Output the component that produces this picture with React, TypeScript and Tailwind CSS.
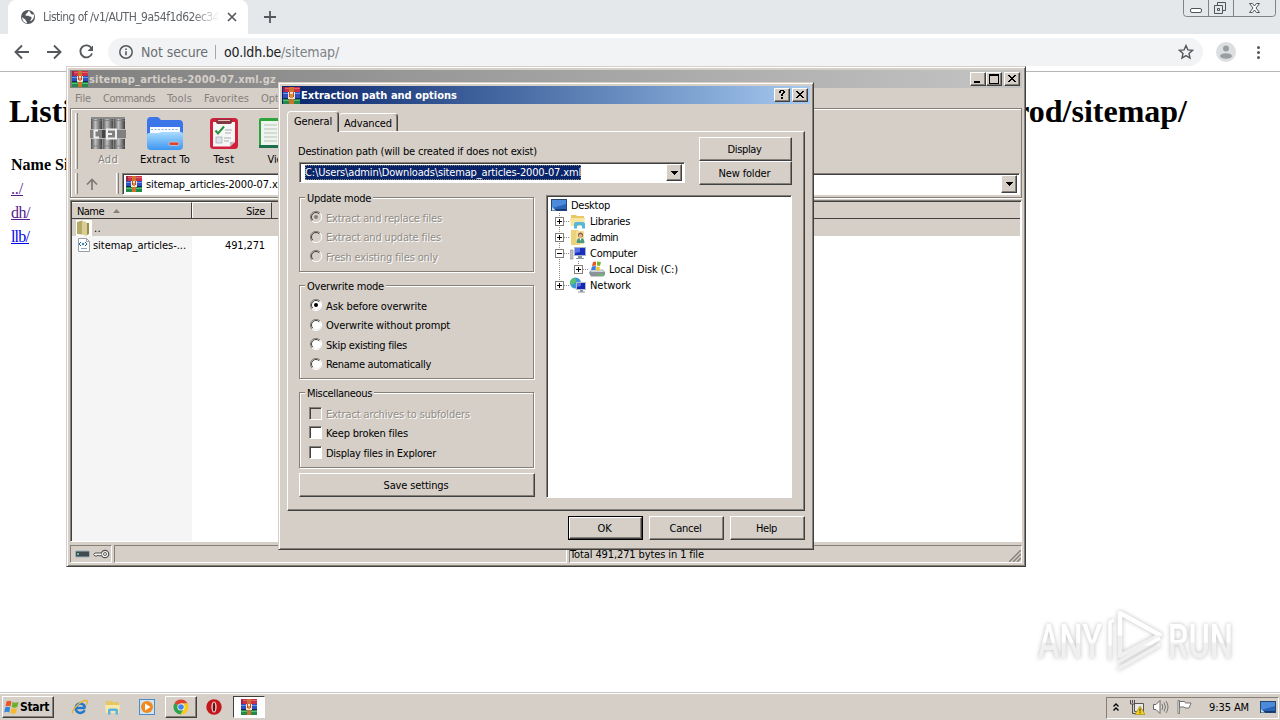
import React, { useLayoutEffect, useRef } from "react";

type Kids = { children?: React.ReactNode };

const UI = "font-['DejaVu_Sans_Condensed','DejaVu_Sans',sans-serif] [font-stretch:condensed]";
const RAISED =
  "border border-t-white border-l-white border-r-[#404040] border-b-[#404040] shadow-[inset_-1px_-1px_0_#858078] bg-[#d5cfc8]";
const SUNKEN =
  "border border-t-[#858078] border-l-[#858078] border-r-white border-b-white shadow-[inset_1px_1px_0_#404040]";
const FRAME =
  "border border-t-[#d5cfc8] border-l-[#d5cfc8] border-r-[#404040] border-b-[#404040] shadow-[inset_1px_1px_0_#fff,inset_-1px_-1px_0_#858078] bg-[#d5cfc8]";

/* A single line of text whose tracking is adjusted so that it spans w pixels.
   Unless flat, its baseline sits one pixel lower than the line box centre. */
function T({ w, flat, className = "", children }: { w: number; flat?: boolean; className?: string; children: string }) {
  const ref = useRef<HTMLSpanElement>(null);
  useLayoutEffect(() => {
    const el = ref.current;
    if (!el) return;
    el.style.letterSpacing = "0px";
    const natural = el.getBoundingClientRect().width;
    el.style.letterSpacing = `${(w - natural) / children.length}px`;
  }, [w, children]);
  return (
    <span ref={ref} className={`inline-block shrink-0 whitespace-pre ${flat ? "" : "mt-px -mb-px"} ${className}`}>
      {children}
    </span>
  );
}

function RarIcon({ className = "h-4 w-4" }: { className?: string }) {
  return (
    <svg viewBox="0 0 16 16" className={`shrink-0 ${className}`} shapeRendering="crispEdges">
      <rect width="16" height="16" fill="#2a2040" />
      <rect x="0" y="0" width="16" height="5" fill="#c9304a" />
      <rect x="0" y="0" width="2" height="5" fill="#96264c" />
      <rect x="2" y="1" width="14" height="1" fill="#e4606c" />
      <rect x="0" y="5" width="16" height="5" fill="#2c50c0" />
      <rect x="0" y="6" width="16" height="1" fill="#7096ec" />
      <rect x="0" y="10" width="16" height="1" fill="#1c2450" />
      <rect x="0" y="11" width="16" height="5" fill="#238a4a" />
      <rect x="0" y="12" width="16" height="1" fill="#50c47a" />
      <rect x="6" y="0" width="4" height="16" fill="#cc742e" />
      <rect x="5" y="5" width="6" height="6" fill="#efe3cc" />
      <rect x="6" y="5" width="1" height="4" fill="#c04e2c" />
      <rect x="9" y="5" width="1" height="4" fill="#c04e2c" />
      <rect x="7" y="7" width="2" height="3" fill="#dc903c" />
    </svg>
  );
}

function MonitorIcon({ className = "h-4 w-4" }: { className?: string }) {
  return (
    <svg viewBox="0 0 16 16" className={`shrink-0 ${className}`}>
      <rect x="0.5" y="2.5" width="15" height="11" fill="#2865b8" stroke="#26466e" />
      <path d="M1 3h14v4L1 11z" fill="#4c8bdc" />
      <path d="M1 12h14v1.5H1z" fill="#163a70" />
      <path d="M1 10l4 3.5H1z" fill="#b9dcf0" />
    </svg>
  );
}

function CapButton({ children, className = "" }: Kids & { className?: string }) {
  return (
    <div className={`flex h-[14px] w-4 items-center justify-center ${RAISED} ${className}`}>
      <svg viewBox="0 0 12 10" className="h-[10px] w-3 shrink-0" shapeRendering="crispEdges">
        {children}
      </svg>
    </div>
  );
}

const CloseGlyph = () => (
  <path
    d="M2 1h2v1H2zM8 1h2v1H8zM3 2h2v1H3zM7 2h2v1H7zM4 3h4v1H4zM5 4h2v1H5zM4 5h4v1H4zM3 6h2v1H3zM7 6h2v1H7zM2 7h2v1H2zM8 7h2v1H8z"
    fill="#000"
  />
);

function DropArrow({ className = "" }: { className?: string }) {
  return (
    <div className={`flex w-4 shrink-0 items-center justify-center ${RAISED} ${className}`}>
      <svg viewBox="0 0 7 4" className="h-1 w-[7px]" shapeRendering="crispEdges">
        <path d="M0 0h7v1H0zM1 1h5v1H1zM2 2h3v1H2zM3 3h1v1H3z" fill="#000" />
      </svg>
    </div>
  );
}

/* ---------- Browser ---------- */

function Browser() {
  return (
    <div className="flex h-[692px] flex-col bg-white">
      <div className="flex h-[34px] justify-between bg-[#e4e8eb]">
        <div className="flex">
          <div className="ml-2 flex h-[34px] w-[240px] items-center rounded-t-lg bg-white pl-3">
            <svg viewBox="0 0 16 16" className="h-4 w-4 shrink-0">
              <circle cx="8" cy="8" r="7" fill="#54585c" />
              <path d="M2.2 8.2l3 2.4c1 .6.3 1.6 1.6 2.2l.3 1.4C4 13.800 1.800 11 2.200 8.200z" fill="#fff" />
              <path d="M9 1.800c-1.600.500-.400 1.800-2 2.300-1 .400-.600 1.700-1.700 1.800 1 1.600 2.800.200 4 1.400.900 1 2.300 0 2.300 1.600 0 1.400-1.400 1.600-1.300 3.400 3-1.200 4.400-4.300 3.300-7.300-.8.700-2 .7-2.600-.2-.6-1-1-1.900-2-3z" fill="#fff" />
            </svg>
            <div className="ml-[7px] flex w-[176px] overflow-hidden pb-px [mask-image:linear-gradient(to_right,#000_85%,transparent)]">
              <T w={176} flat className="font-['DejaVu_Sans_Condensed','DejaVu_Sans'] text-[12px] leading-[18px] text-[#5f6368]">
                Listing of /v1/AUTH_9a54f1d62ec34
              </T>
            </div>
            <svg viewBox="0 0 10 10" className="ml-2 h-[10px] w-[10px] shrink-0">
              <path d="M1 1l8 8M9 1l-8 8" stroke="#54585c" strokeWidth="1.700" />
            </svg>
          </div>
          <svg viewBox="0 0 14 14" className="mt-[10px] ml-[15px] h-[14px] w-[14px]">
            <path d="M7 1v12M1 7h12" stroke="#54585c" strokeWidth="1.800" />
          </svg>
        </div>
        <svg viewBox="0 0 94 18" className="mr-[3px] h-[18px] w-[94px]" fill="none">
          <path d="M.5 0v13.500q0 3 3 3h86q3 0 3-3V0M25.500 0v16M50.500 0v16" stroke="#7f8489" />
          <rect x="7.500" y="8.500" width="11" height="4" rx="1.500" stroke="#4f5459" fill="#fff" />
          <path d="M34.500 5.500v-3h8v8h-3M31.500 5.500h8v8h-8zM34.500 8.500h2v2h-2z" stroke="#4f5459" />
          <path d="M66.500 3.500h3l2 2.500 2-2.500h3l-3.500 4.500 3.500 4.500h-3l-2-2.500-2 2.500h-3l3.500-4.500z" stroke="#4f5459" fill="#fff" />
        </svg>
      </div>
      <div className="flex h-[38px] shrink-0 items-center border-b border-[#b4b6b8] bg-white pb-px">
        <svg viewBox="0 0 88 20" className="ml-[12px] h-5 w-[88px] shrink-0" fill="none" stroke="#54585c" strokeWidth="1.900">
          <path d="M17 10H4M10 3.500L3.500 10l6.500 6.500M35 10h13M42 3.500l6.500 6.500-6.500 6.500" />
          <path d="M79.500 6.200A6 6 0 1 0 80 11.500" />
          <path d="M81 3.500v5.500h-5.500z" fill="#54585c" stroke="none" />
        </svg>
        <div className="ml-[8px] flex h-7 w-[1095px] items-center rounded-full bg-[#f1f3f4] pl-[10px]">
          <svg viewBox="0 0 16 16" className="h-4 w-4 shrink-0">
            <circle cx="8" cy="8" r="6.200" fill="none" stroke="#54585c" strokeWidth="1.500" />
            <path d="M7.200 7.200h1.600v4H7.200zM7.200 4.500h1.600v1.600H7.200z" fill="#54585c" />
          </svg>
          <T w={67} flat className="ml-[7px] font-['DejaVu_Sans_Condensed','DejaVu_Sans'] text-[14px] leading-5 text-[#6b6f74]">Not secure</T>
          <div className="ml-[7px] h-[14px] w-px bg-[#a3a7ab]" />
          <T w={57} flat className="ml-[8px] font-['DejaVu_Sans_Condensed','DejaVu_Sans'] text-[14px] leading-5 text-[#202124]">o0.ldh.be</T>
          <T w={58} flat className="font-['DejaVu_Sans_Condensed','DejaVu_Sans'] text-[14px] leading-5 text-[#7d8186]">/sitemap/</T>
          <svg viewBox="0 0 16 16" className="mr-[9px] ml-auto h-4 w-4" fill="none">
            <path d="M8 1.600l1.900 4.300 4.600.4-3.500 3.100 1 4.600-4-2.400-4 2.400 1-4.600L1.500 6.300l4.600-.4z" stroke="#54585c" strokeWidth="1.400" />
          </svg>
        </div>
        <svg viewBox="0 0 20 20" className="ml-[13px] h-5 w-5 shrink-0">
          <circle cx="10" cy="10" r="10" fill="#dcdee0" />
          <circle cx="10" cy="6.500" r="3" fill="#9b9ea1" />
          <ellipse cx="10" cy="14" rx="6" ry="2.800" fill="#9b9ea1" />
        </svg>
        <div className="ml-[21px] flex flex-col gap-[2px]">
          <div className="h-[3px] w-[3px] rounded-full bg-[#54585c]" />
          <div className="h-[3px] w-[3px] rounded-full bg-[#54585c]" />
          <div className="h-[3px] w-[3px] rounded-full bg-[#54585c]" />
        </div>
      </div>
      <div className="px-2 pt-[21px] font-['Liberation_Serif',serif] text-base text-black">
        <h1 className="ml-px flex w-[1178px] justify-between text-[32px] leading-[37px] font-bold">
          <span>Listing of /v1/AUTH_9a54f1d62ec34</span>
          <span>prod/sitemap/</span>
        </h1>
        <div className="mt-[23px] flex flex-col items-start pl-[3px]">
          <div className="h-6 leading-6 font-bold">Name Size</div>
          <a className="h-6 leading-6 text-[#551a8b]"><T w={12} flat className="underline">../</T></a>
          <a className="h-6 leading-6 text-[#551a8b]"><T w={19} flat className="underline">dh/</T></a>
          <a className="h-6 leading-6 text-[#0000ee]"><T w={18} flat className="underline">llb/</T></a>
        </div>
      </div>
    </div>
  );
}

/* ---------- Archive window ---------- */

function BooksGrey() {
  return (
    <svg viewBox="0 0 36 34" className="h-[34px] w-9">
      <defs>
        <linearGradient id="spine" x1="0" x2="1">
          <stop offset="0" stopColor="#4e4e4e" />
          <stop offset=".4" stopColor="#c0c0c0" />
          <stop offset="1" stopColor="#3e3e3e" />
        </linearGradient>
      </defs>
      <rect x="1" y="1" width="11" height="32" fill="url(#spine)" />
      <rect x="12.500" y="1" width="11" height="32" fill="url(#spine)" />
      <rect x="24" y="1" width="11" height="32" fill="url(#spine)" />
      <path d="M1 4.500h34M1 30h34" stroke="#777" strokeOpacity=".7" />
      <rect x="0" y="13" width="36" height="10" fill="#808080" />
      <path d="M0 13.500h36M0 22.500h36" stroke="#b9b9b9" />
      <path d="M8 14.500H4.500v7H9M17 13.500h9v9h-9zM22 18h-6" fill="none" stroke="#f0f0f0" strokeWidth="2" />
      <rect x="12" y="14" width="3" height="8" fill="#444" />
      <path d="M1 1h34v2H1z" fill="#8a8a8a" />
    </svg>
  );
}

function FolderBlue() {
  return (
    <svg viewBox="0 0 36 34" className="h-[34px] w-9">
      <defs>
        <linearGradient id="fold" x1="0" x2="0" y1="0" y2="1">
          <stop offset="0" stopColor="#a9dcff" />
          <stop offset="1" stopColor="#3d96f0" />
        </linearGradient>
      </defs>
      <path d="M0 5q0-4 4-4h6q2 0 3 2l1 1h18q4 0 4 4v14H0z" fill="#3a76ea" />
      <path d="M3 11h30v12H3z" fill="#f7fbff" />
      <path d="M4 13.500h28" stroke="#8fb4dc" strokeDasharray="2 1.500" />
      <path d="M0 19q0-2 2-2h10l2-1h20q2 0 2 2v12q0 4-4 4H4q-4 0-4-4z" fill="url(#fold)" />
      <rect x="22" y="26" width="10" height="3.500" rx="1.500" fill="#e2452b" stroke="#b8dcf8" strokeWidth=".7" />
    </svg>
  );
}

function Clipboard() {
  return (
    <svg viewBox="0 0 36 34" className="h-[34px] w-9">
      <rect x="4" y="2" width="28" height="31" rx="3.500" fill="#d2203c" />
      <path d="M7 6h22v20l-5 4.500H7z" fill="#f6f6f6" />
      <path d="M29 26l-5 4.500V26z" fill="#bdbdbd" />
      <rect x="10" y="3" width="16" height="5" rx="2" fill="#83383e" />
      <path d="M12 4.500h12" stroke="#e8c0c0" />
      <path d="M9.500 14.500l2.500 3 6-7" fill="none" stroke="#2b9140" strokeWidth="2" />
      <rect x="10" y="21" width="6" height="6" fill="#dce3ea" stroke="#a2acb6" strokeWidth=".7" />
      <path d="M19 14h7M19 17h6M18 22h7M18 25h5" stroke="#a9adb2" />
    </svg>
  );
}

function BookGreen() {
  return (
    <svg viewBox="0 0 40 34" className="h-[34px] w-[42px] shrink-0">
      <path d="M0 4q0-2 2-2h17l2 2 2-2h16v28H0z" fill="#2fa33c" />
      <path d="M2 5h18v24H2z" fill="#f0f4f0" />
      <path d="M5 9h13M5 13h13M5 17h13M5 21h13M5 25h13" stroke="#b5c4b6" />
      <path d="M0 29h39v3H0z" fill="#1c6f4c" />
    </svg>
  );
}

function Tool({ icon, label, w, className }: { icon: React.ReactNode; label: string; w: number; className: string }) {
  return (
    <div className={`flex shrink-0 flex-col items-center pt-[7px] ${className}`}>
      {icon}
      <div className="mt-px flex h-[15px] leading-[15px]">
        <T w={w}>{label}</T>
      </div>
    </div>
  );
}

function ArchiveWindow() {
  return (
    <div className={`absolute top-[66px] left-[66px] flex h-[501px] w-[960px] flex-col p-[3px] text-[11px] leading-4 text-black ${UI} ${FRAME}`}>
      <div className="flex h-[18px] shrink-0 items-center bg-linear-to-r from-[#808080] to-[#c4c4c4] pr-[2px] pl-[2px]">
        <RarIcon />
        <T w={187} className="ml-px font-bold text-[#d5cfc8]">sitemap_articles-2000-07.xml.gz</T>
        <CapButton className="ml-auto"><path d="M2 7h6v2H2z" /></CapButton>
        <CapButton><path d="M1 0h10v10H1zM2 2v7h8V2z" fillRule="evenodd" /></CapButton>
        <CapButton className="ml-[2px]"><CloseGlyph /></CapButton>
      </div>
      <div className="flex h-5 shrink-0 items-center pl-[5px] text-[#85807a]">
        <T w={16}>File</T>
        <T w={52} className="ml-3">Commands</T>
        <T w={25} className="ml-3">Tools</T>
        <T w={45} className="ml-3">Favorites</T>
        <T w={38} className="ml-3">Options</T>
      </div>
      <div className="flex h-[90px] shrink-0 flex-col border border-[#858078] shadow-[inset_1px_1px_0_#fff,0_1px_0_#fff]">
        <div className="flex h-[61px] pl-1">
          <div className="mt-1 h-[56px] w-[3px] border-r border-l border-r-[#858078] border-l-white" />
          <Tool icon={<BooksGrey />} label="Add" w={20} className="ml-[7px] w-[46px] text-[#85807a] [text-shadow:1px_1px_0_#fff]" />
          <Tool icon={<FolderBlue />} label="Extract To" w={50} className="ml-[3px] w-[62px]" />
          <Tool icon={<Clipboard />} label="Test" w={21} className="ml-[5px] w-[46px]" />
          <Tool icon={<BookGreen />} label="View" w={23} className="ml-[9px] w-[46px]" />
        </div>
        <div className="flex h-[27px] items-start pt-[3px] pl-1">
          <div className="h-[21px] w-[3px] border-r border-l border-r-[#858078] border-l-white" />
          <svg viewBox="0 0 12 12" className="mt-[5px] ml-[8px] h-3 w-3" fill="none">
            <path d="M6 12V2M1 6.500l5-5 5 5" stroke="#7d7a76" strokeWidth="1.700" />
          </svg>
          <div className="ml-[18px] h-[21px] w-[3px] border-r border-l border-r-[#858078] border-l-white" />
          <div className={`ml-[3px] flex h-[22px] w-[898px] items-center bg-white p-[2px] pl-[3px] ${SUNKEN}`}>
            <RarIcon />
            <T w={158} className="ml-[4px]">sitemap_articles-2000-07.xml.gz</T>
            <DropArrow className="ml-auto h-[18px]" />
          </div>
        </div>
      </div>
      <div className={`mt-[2px] flex h-[342px] shrink-0 flex-col bg-white pt-px pr-px pl-px ${SUNKEN}`}>
        <div className="flex h-[17px] shrink-0 items-center border-b border-[#404040] bg-[#d5cfc8]">
          <div className="flex h-full w-[120px] items-center border-t border-r border-t-white border-r-[#404040] pl-[5px]">
            <T w={27}>Name</T>
            <svg viewBox="0 0 7 4" className="ml-[9px] h-1 w-[7px]"><path d="M3.500 0L7 4H0z" fill="#85807a" /></svg>
          </div>
          <div className="flex h-full w-[80px] items-center justify-end border-t border-r border-l border-t-white border-r-[#404040] border-l-white pr-[6px]">
            <T w={19}>Size</T>
          </div>
        </div>
        <div className="flex min-h-0 flex-1 flex-col bg-[linear-gradient(to_right,#f5f5f5_120px,transparent_120px)]">
          <div className="flex h-[17px] shrink-0 items-center bg-[#d5cfc8] pl-1">
            <svg viewBox="0 0 16 16" className="h-4 w-4 bg-white">
              <path d="M1 2l5-1.500v14L1 14z" fill="#b5a968" />
              <path d="M6 .5l5 2V16l-5-1.500z" fill="#d9cf94" />
              <path d="M11 3h2v11l-2 1z" fill="#988c4c" />
            </svg>
            <T w={7} className="ml-[2px]">..</T>
          </div>
          <div className="flex h-[18px] items-center pl-1">
            <svg viewBox="0 0 16 16" className="h-4 w-4">
              <path d="M2.500 1.500h8l3 3v10h-11z" fill="#fff" stroke="#9aa0a8" />
              <path d="M10.500 1.500v3h3" fill="none" stroke="#9aa0a8" />
              <path d="M5 5L3 7l2 2M9 5l2 2-2 2" fill="none" stroke="#2d5f9b" />
              <circle cx="7" cy="7" r="1.300" fill="#3c8fb2" />
              <path d="M5 11.500h6" stroke="#8aa6c4" />
            </svg>
            <T w={93} className="ml-px">sitemap_articles-...</T>
            <T w={40} className="ml-[39px]">491,271</T>
          </div>
        </div>
      </div>
      <div className="mt-[3px] flex h-[18px] shrink-0 gap-[2px]">
        <div className="flex w-[42px] items-center gap-[3px] border border-t-[#858078] border-r-white border-b-white border-l-[#858078] pl-[4px]">
          <svg viewBox="0 0 15 8" className="h-2 w-[15px]">
            <rect x=".5" y="1" width="14" height="6" rx="1" fill="#3e4a50" stroke="#9db0b8" />
            <path d="M2 3h2v2H2z" fill="#64c29a" />
          </svg>
          <svg viewBox="0 0 17 10" className="h-[10px] w-[17px]" fill="none">
            <circle cx="12" cy="5" r="3.700" fill="#f4f4f4" stroke="#505050" strokeWidth="1.200" />
            <circle cx="12" cy="5" r="1.500" stroke="#606060" />
            <path d="M8.500 4H2L.5 5.500 2 7h2l1-1 1 1 2.500-.5" fill="#f4f4f4" stroke="#505050" />
          </svg>
        </div>
        <div className="w-[453px] border border-t-[#858078] border-r-white border-b-white border-l-[#858078]" />
        <div className="flex flex-1 items-center justify-between border border-t-[#858078] border-r-white border-b-white border-l-[#858078]">
          <T w={134}>Total 491,271 bytes in 1 file</T>
          <svg viewBox="0 0 12 12" className="h-3 w-3 self-end">
            <path d="M0 12L12 0M4 12l8-8M8 12l4-4" stroke="#858078" strokeWidth="1.500" />
          </svg>
        </div>
      </div>
    </div>
  );
}

/* ---------- Extraction dialog ---------- */

function Button({ label, w, className }: { label: string; w: number; className: string }) {
  return (
    <div className={`flex items-center justify-center pr-[2px] ${RAISED} ${className}`}>
      <T w={w}>{label}</T>
    </div>
  );
}

function Group({ title, w, className, children }: Kids & { title: string; w: number; className: string }) {
  return (
    <div className={`flex w-[235px] flex-col border border-[#858078] pl-[9px] shadow-[inset_1px_1px_0_#fff,1px_1px_0_#fff] ${className}`}>
      <div className="-mt-[8px] -ml-[4px] flex h-[17px] self-start bg-[#d5cfc8] px-[2px] pt-px">
        <T w={w} flat>{title}</T>
      </div>
      {children}
    </div>
  );
}

function Radio({ label, w, on, disabled }: { label: string; w: number; on?: boolean; disabled?: boolean }) {
  return (
    <div className={`flex h-[19.5px] items-center ${disabled ? "text-[#918c86] [text-shadow:1px_1px_0_#fff]" : ""}`}>
      <svg viewBox="0 0 12 12" className="-mt-px ml-px h-3 w-3" fill="none">
        <circle cx="6" cy="6" r="5" fill={disabled ? "#d5cfc8" : "#fff"} />
        <path d="M2 10A5.500 5.500 0 0 1 10 2" stroke="#858078" />
        <path d="M2.800 9.200A4.500 4.500 0 0 1 9.200 2.800" stroke="#404040" />
        <path d="M2 10A5.500 5.500 0 0 0 10 2" stroke="#fff" />
        {on && <circle cx="6" cy="6" r="2" fill={disabled ? "#858078" : "#000"} />}
      </svg>
      <T w={w} className="ml-1">{label}</T>
    </div>
  );
}

function Check({ label, w, disabled }: { label: string; w: number; disabled?: boolean }) {
  return (
    <div className={`flex h-[19.5px] items-center ${disabled ? "text-[#918c86] [text-shadow:1px_1px_0_#fff]" : ""}`}>
      <div className={`-mt-px h-[13px] w-[13px] ${disabled ? "bg-[#d5cfc8]" : "bg-white"} ${SUNKEN}`} />
      <T w={w} className="ml-1">{label}</T>
    </div>
  );
}

function Expander({ open, last }: { open?: boolean; last?: boolean }) {
  return (
    <svg viewBox="0 0 19 16" className="h-4 w-[19px] shrink-0" shapeRendering="crispEdges">
      <path d={`M8.500 0v${last ? 8 : 16}M9 8.500h10`} stroke="#8c8c8c" strokeDasharray="1 1" />
      <rect x="4.500" y="4.500" width="8" height="8" fill="#fff" stroke="#858078" />
      <path d={open ? "M6 8h5v1H6z" : "M6 8h5v1H6zM8 6h1v5H8z"} fill="#000" />
    </svg>
  );
}

const LibrariesIcon = () => (
  <svg viewBox="0 0 16 16" className="h-4 w-4">
    <path d="M1 2h5l1 1h7v10H1z" fill="#e7c865" />
    <path d="M0 5h15l-1 8H1z" fill="#f8e6a0" />
    <path d="M4 15.500V11q0-2 2-2h6q3 0 3 2v4.500h-3V13q-2.500-2-5 0v2.500z" fill="#58b6dc" />
  </svg>
);
const UserIcon = () => (
  <svg viewBox="0 0 16 16" className="h-4 w-4">
    <path d="M1 1h7l2 2v13H1z" fill="#ecd27a" />
    <path d="M6 2h8v13H6z" fill="#f4df98" />
    <circle cx="10.500" cy="6" r="2.500" fill="#8a5a3a" />
    <circle cx="10.500" cy="6.800" r="1.700" fill="#e6b48c" />
    <path d="M6.500 14q0-5 4-5t4 5z" fill="#4b9a7c" />
    <path d="M9.500 9h2l-1 3z" fill="#fff" />
  </svg>
);
const ComputerIcon = () => (
  <svg viewBox="0 0 16 16" className="h-4 w-4">
    <path d="M0 5h3v9H0z" fill="#bfc5c9" stroke="#7d868c" strokeWidth=".6" />
    <path d="M4 2h12v9H4z" fill="#aab4c8" />
    <path d="M5 3h10v7H5z" fill="#1a2fc0" />
    <path d="M5 3h5v4L5 8z" fill="#5672ea" />
    <path d="M8 11h4v2h2v1H6v-1h2z" fill="#8e979d" />
  </svg>
);
const DiskIcon = () => (
  <svg viewBox="0 0 16 16" className="h-4 w-4">
    <path d="M1 10l3-2h9l3 3v3l-2 1.500H2L0 12z" fill="#88949a" />
    <path d="M1 10l3-2h9l2 3H3z" fill="#ccd5d8" />
    <path d="M10 13h4v1.500h-4z" fill="#58d058" />
    <path d="M4 1l3-.5v4L3 5z" fill="#e6562b" />
    <path d="M8 .5l4 .5-1 4-3-.5z" fill="#74b72f" />
    <path d="M3 5.500l4-.5-.5 4L2 9z" fill="#3a7de0" />
    <path d="M7.500 5.500l3.500.5-1 4-3-1z" fill="#f4c32a" />
  </svg>
);
const NetworkIcon = () => (
  <svg viewBox="0 0 16 16" className="h-4 w-4">
    <circle cx="5.500" cy="6" r="5.500" fill="#3d9ad8" />
    <path d="M2 2q4-2 4 1T3 7q-1 2-3 0 0-3 2-5zM7 8q3-1 3 1l-3 2z" fill="#5cc268" />
    <path d="M6 5h10v8H6z" fill="#b3bccd" />
    <path d="M7 6h8v6H7z" fill="#1526b4" />
    <path d="M7 6h4v3l-4 1z" fill="#5672ea" />
    <path d="M10 13h3v1.500h2v1H8v-1h2z" fill="#8e979d" />
  </svg>
);

function Dialog() {
  return (
    <div className={`absolute top-[82px] left-[278px] flex h-[468px] w-[536px] flex-col p-[3px] text-[11px] leading-4 text-black ${UI} ${FRAME}`}>
      <div className="flex h-[18px] shrink-0 items-center bg-linear-to-r from-[#0a246a] to-[#a6caf0] pr-[2px] pl-px">
        <RarIcon className="h-[17px] w-[17px]" />
        <T w={156} className="ml-[1px] font-bold text-white">Extraction path and options</T>
        <CapButton className="ml-auto">
          <path d="M4 0h4v1H4zM3 1h2v2H3zM7 1h2v2H7zM6 3h2v1H6zM5 4h2v2H5zM5 7h2v2H5z" />
        </CapButton>
        <CapButton className="ml-[2px]"><CloseGlyph /></CapButton>
      </div>
      <div className="z-10 mt-[7px] -mb-px flex h-[21px] shrink-0 items-end pl-[5px]">
        <div className="flex h-[21px] w-[52px] items-start rounded-t-sm border-t border-r border-l border-t-white border-r-[#404040] border-l-white bg-[#d5cfc8] pt-px pl-[6px] shadow-[inset_-1px_0_0_#858078]">
          <T w={38}>General</T>
        </div>
        <div className="mb-px flex h-[18px] w-[59px] items-start rounded-t-sm border-t border-r border-t-white border-r-[#404040] pt-px pl-[5px] shadow-[inset_-1px_0_0_#858078]">
          <T w={48}>Advanced</T>
        </div>
      </div>
      <div className={`ml-[5px] flex h-[380px] w-[518px] shrink-0 flex-col pl-[10px] ${RAISED}`}>
        <div className="flex h-[63px] shrink-0 pt-[5px]">
          <div className="flex w-[401px] flex-col pt-[6px]">
            <T w={239} className="self-start">Destination path (will be created if does not exist)</T>
            <div className={`mt-[3px] ml-px flex h-[21px] w-[386px] shrink-0 items-center bg-white p-[2px] ${SUNKEN}`}>
              <T w={276} flat className="-mt-px ml-[3px] h-[15px] bg-[#0a246a] leading-[15px] text-white outline outline-dotted outline-[#d8c890]/60 -outline-offset-1">
                C:\Users\admin\Downloads\sitemap_articles-2000-07.xml
              </T>
              <DropArrow className="ml-auto h-[17px]" />
            </div>
          </div>
          <div className="flex flex-col">
            <Button label="Display" w={34} className="h-6 w-[93px] shrink-0" />
            <Button label="New folder" w={52} className="h-6 w-[93px] shrink-0" />
          </div>
        </div>
        <div className="flex">
          <div className="flex w-[248px] flex-col">
            <Group title="Update mode" w={64} className="mt-[2px] ml-px h-[75px]">
              <div className="mt-px flex flex-col">
                <Radio label="Extract and replace files" w={116} on disabled />
                <Radio label="Extract and update files" w={115} disabled />
                <Radio label="Fresh existing files only" w={112} disabled />
              </div>
            </Group>
            <Group title="Overwrite mode" w={77} className="mt-[13px] ml-px h-[94px]">
              <div className="mt-px flex flex-col">
                <Radio label="Ask before overwrite" w={101} on />
                <Radio label="Overwrite without prompt" w={124} />
                <Radio label="Skip existing files" w={81} />
                <Radio label="Rename automatically" w={105} />
              </div>
            </Group>
            <Group title="Miscellaneous" w={65} className="mt-[13px] ml-px h-[76px]">
              <div className="mt-[2px] flex flex-col">
                <Check label="Extract archives to subfolders" w={144} disabled />
                <Check label="Keep broken files" w={82} />
                <Check label="Display files in Explorer" w={110} />
              </div>
            </Group>
            <Button label="Save settings" w={65} className="mt-[5px] ml-px h-6 w-[236px]" />
          </div>
          <div className={`flex h-[303px] w-[246px] flex-col bg-white pt-[1px] pl-[4px] ${SUNKEN}`}>
            <div className="flex h-4 items-center"><MonitorIcon /><T w={39} className="ml-1">Desktop</T></div>
            <div className="flex h-4 items-center"><Expander /><LibrariesIcon /><T w={40} className="ml-1">Libraries</T></div>
            <div className="flex h-4 items-center"><Expander /><UserIcon /><T w={28} className="ml-1">admin</T></div>
            <div className="flex h-4 items-center"><Expander open /><ComputerIcon /><T w={47} className="ml-1">Computer</T></div>
            <div className="flex h-4 items-center">
              <svg viewBox="0 0 19 16" className="h-4 w-[19px]" shapeRendering="crispEdges">
                <path d="M8.500 0v16" stroke="#8c8c8c" strokeDasharray="1 1" />
              </svg>
              <Expander last /><DiskIcon /><T w={69} className="ml-1">Local Disk (C:)</T>
            </div>
            <div className="flex h-4 items-center"><Expander last /><NetworkIcon /><T w={41} className="ml-1">Network</T></div>
          </div>
        </div>
      </div>
      <div className="mt-[5px] flex gap-[6px] pl-[286px]">
        <div className="border border-black"><Button label="OK" w={14} className="h-[22px] w-[73px]" /></div>
        <Button label="Cancel" w={32} className="h-6 w-[75px]" />
        <Button label="Help" w={21} className="h-6 w-[75px]" />
      </div>
    </div>
  );
}

/* ---------- Watermark and taskbar ---------- */

function Watermark() {
  return (
    <svg viewBox="0 0 210 70" className="absolute top-[606px] left-[1030px] h-[70px] w-[210px] overflow-visible drop-shadow-[0_0_2px_rgba(0,0,0,0.26)]">
      <defs>
        <linearGradient id="wm" x1="0" x2="0" y1="0" y2="1">
          <stop offset=".5" stopColor="#fff" />
          <stop offset=".54" stopColor="#f0f0f0" />
        </linearGradient>
      </defs>
      <text x="8" y="52" fontSize="49" textLength="64" lengthAdjust="spacingAndGlyphs" fill="url(#wm)" className="font-['Roboto',sans-serif] font-medium">ANY</text>
      <text x="138" y="52" fontSize="49" textLength="65" lengthAdjust="spacingAndGlyphs" fill="url(#wm)" className="font-['Roboto',sans-serif] font-medium">RUN</text>
      <g fill="none" stroke="url(#wm)" strokeWidth="4.500" strokeLinejoin="round">
        <path d="M90 7v43l40-21z" />
        <path d="M84 14l-4 2v38M88 56l42-24M88 63l42-24" strokeWidth="3.500" />
      </g>
    </svg>
  );
}

function Taskbar() {
  return (
    <div className={`flex h-[28px] items-start border-t border-[#c4c8cc] bg-[#d5cfc8] pt-[3px] text-[11px] leading-4 shadow-[inset_0_1px_0_#fff] ${UI}`}>
      <div className={`ml-[2px] flex h-[22px] w-[52px] items-center pl-px ${RAISED}`}>
        <svg viewBox="0 0 16 16" className="h-4 w-4 shrink-0">
          <path d="M2.500 2.500q2.500-1.500 5 0l-1 5q-2.500-1.500-5 0z" fill="#e8562a" />
          <path d="M8.500 3q2.500 1.500 6 0l-1.200 5q-3 1.500-5.600 0z" fill="#6fae2c" />
          <path d="M1.200 8.500q2.500-1.500 5 0l-1 5q-2.500-1.500-5 0z" fill="#2f86dc" />
          <path d="M7.500 9q2.500 1.500 5.500 0l-1.200 5q-3 1.500-5.500 0z" fill="#f6b92a" />
        </svg>
        <T w={29} flat className="text-[12px] font-bold">Start</T>
      </div>
      <svg viewBox="0 0 16 16" className="mt-[3px] ml-[18px] h-4 w-4" fill="none">
        <path d="M13.500 9H5M12.600 11.200A4.700 4.700 0 1 1 13 8.600" stroke="#2479cc" strokeWidth="2.600" />
        <path d="M1 14.500C-1 11 9 1 14.500 1.500c2 .5.500 3-.5 4.500" stroke="#e5b534" strokeWidth="1.300" />
      </svg>
      <svg viewBox="0 0 16 16" className="mt-[3px] ml-[17px] h-4 w-4">
        <path d="M1 2h6l1 1h6v11H1z" fill="#e5c766" />
        <path d="M0 6h15l-1 8H1z" fill="#f7e7a8" />
        <path d="M3 15.500V11q0-1.500 2-1.500h6q2 0 2 1.500v4.500h-2.500V12h-5v3.500z" fill="#5bb4df" />
      </svg>
      <svg viewBox="0 0 16 16" className="mt-[3px] ml-[18px] h-4 w-4">
        <rect x=".5" y=".5" width="15" height="15" fill="#cfe4f4" stroke="#4c8cc4" />
        <circle cx="8" cy="8" r="6" fill="#f08a1e" />
        <path d="M6 4.500l5.500 3.500L6 11.500z" fill="#fff" />
      </svg>
      <div className={`ml-[10px] flex h-[22px] w-8 items-center justify-center ${RAISED}`}>
        <svg viewBox="0 0 16 16" className="h-4 w-4">
          <path d="M8 8L1.500 4.200A7.500 7.500 0 0 1 14.500 4.500L8 4.500z" fill="#dd4132" />
          <path d="M8 8L1.500 4.200A7.500 7.500 0 0 0 7.500 15.500L11 9.700z" fill="#2fa24c" />
          <path d="M8 4.500h6.500A7.500 7.500 0 0 1 7.500 15.500L11 9.700z" fill="#fbc917" />
          <circle cx="8" cy="8" r="3.600" fill="#fff" />
          <circle cx="8" cy="8" r="2.800" fill="#4284e8" />
        </svg>
      </div>
      <svg viewBox="0 0 16 16" className="mt-[3px] ml-[9px] h-4 w-4">
        <circle cx="8" cy="8" r="7.700" fill="#c4161c" />
        <ellipse cx="8" cy="8" rx="2.600" ry="5.500" fill="#e8e0da" />
        <ellipse cx="8" cy="8" rx="1.300" ry="4.500" fill="#6d0e12" />
      </svg>
      <div className="ml-[11px] flex h-[22px] w-8 items-center justify-center border border-t-[#404040] border-r-white border-b-white border-l-[#404040] bg-white">
        <RarIcon />
      </div>
      <div className="mt-px mr-px ml-auto flex h-[22px] w-[173px] items-center border border-t-[#858078] border-r-white border-b-white border-l-[#858078]">
        <svg viewBox="0 0 6 8" className="-mt-[3px] ml-[6px] h-2 w-[6px]" fill="none">
          <path d="M.5 3.500L3 1l2.500 2.500M.5 7.500L3 5l2.500 2.500" stroke="#000" strokeWidth="1.300" />
        </svg>
        <svg viewBox="0 0 16 16" className="-mt-[2px] ml-[10px] h-4 w-4">
          <path d="M5.500 4.500h9v8h-9z" fill="#e9e9e9" stroke="#555" />
          <path d="M1.500 1v4h4V1M3.500 5v9.500H8M3.500 1v3" fill="none" stroke="#4c4c4c" />
          <path d="M11 7l5 8.500H6z" fill="#f5cf1e" stroke="#a88c10" strokeWidth=".7" />
          <path d="M10.500 9.500h1v3h-1zM10.500 13.300h1v1h-1z" fill="#222" />
        </svg>
        <svg viewBox="0 0 17 16" className="-mt-[2px] ml-[7px] h-4 w-[17px]" fill="none">
          <path d="M1.500 5.500h2.500l4-4v13l-4-4H1.500z" fill="#fff" stroke="#666" />
          <path d="M10 5q1.500 3 0 6M12 3.500q3 4.500 0 9M14 2q4 6 0 12" stroke="#777" />
        </svg>
        <svg viewBox="0 0 16 16" className="-mt-[2px] ml-[7px] h-4 w-4">
          <path d="M2 1.500h1.500v13H2z" fill="#fff" stroke="#666" strokeWidth=".8" />
          <path d="M3.500 2.500h5l1 1.500h5.500l-2 5H9l-1-1H3.500z" fill="#fff" stroke="#666" strokeWidth=".9" />
        </svg>
        <T w={40} flat className="ml-[17px]">9:35 AM</T>
        <MonitorIcon className="-mt-[2px] ml-[11px] h-4 w-4" />
      </div>
    </div>
  );
}

export default function App() {
  return (
    <div className="relative h-[720px] w-[1280px] overflow-hidden bg-white">
      <Browser />
      <Taskbar />
      <ArchiveWindow />
      <Dialog />
      <Watermark />
    </div>
  );
}
